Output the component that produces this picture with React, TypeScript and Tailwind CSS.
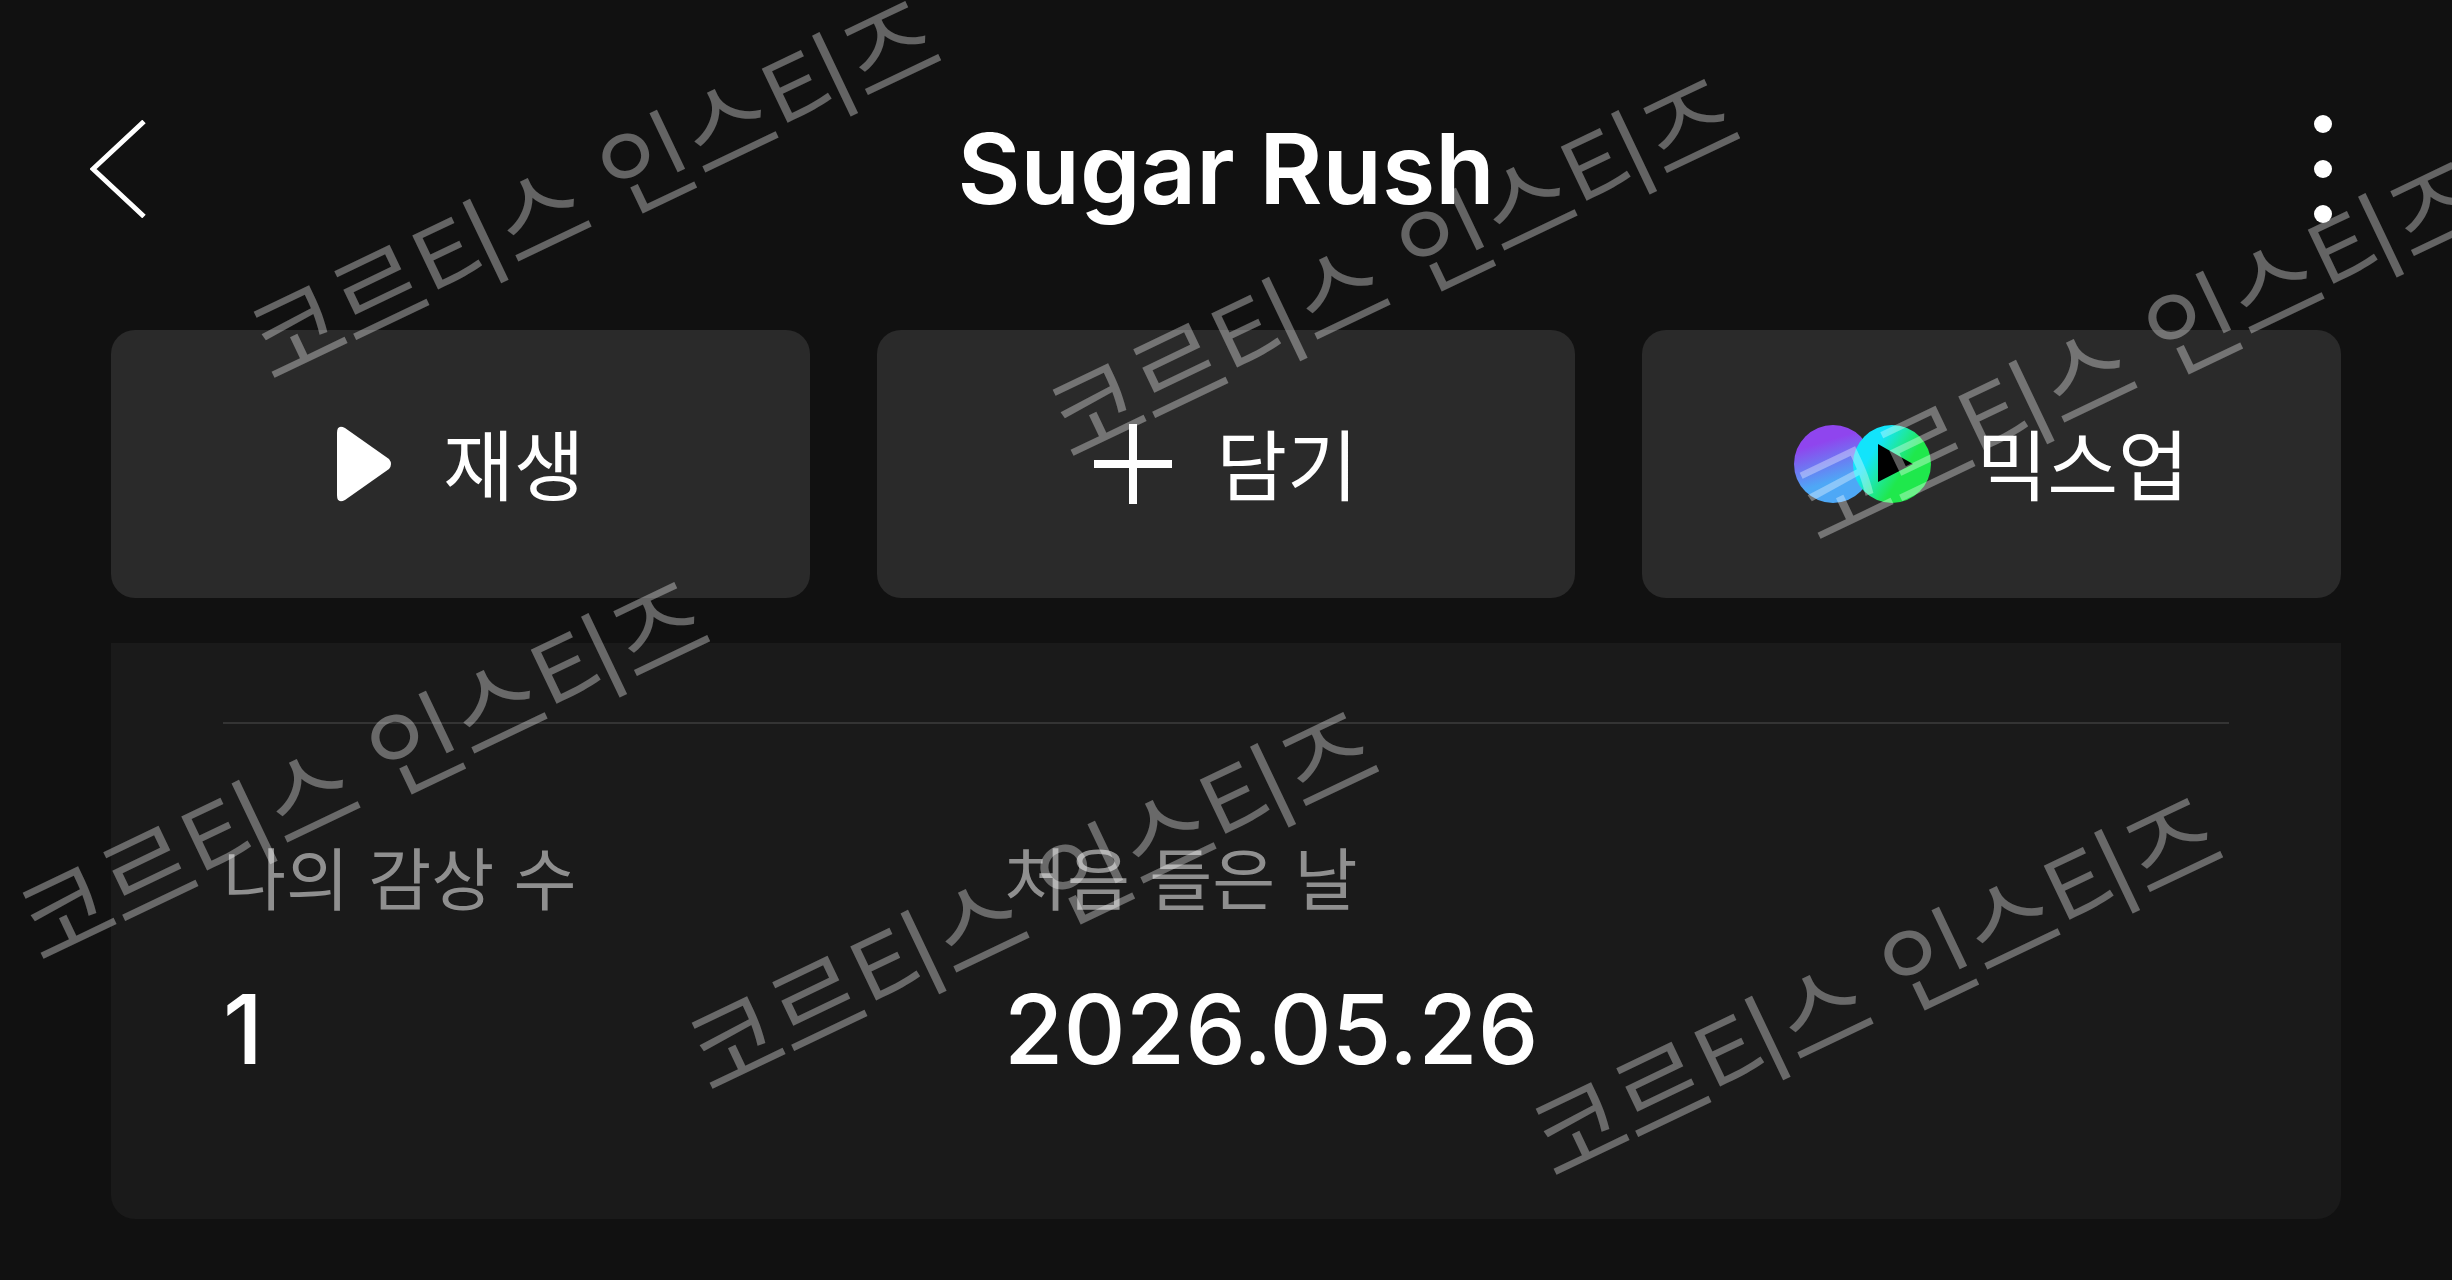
// Track detail screen - dark header, action buttons and listening stats
import React from 'react';

const KR = "font-['Inter','Noto_Sans_CJK_KR',sans-serif]";

const marks = [
  'left-[594px] top-[191px]',
  'left-[1393px] top-[269px]',
  'left-[2140px] top-[352px]',
  'left-[363px] top-[772px]',
  'left-[1032px] top-[902px]',
  'left-[1876px] top-[988px]',
];

const ActionButton: React.FC<{ icon: React.ReactNode; label: string }> = ({ icon, label }) => (
  <button className="h-[268px] flex-1 bg-[#2a2a2a] rounded-[24px] flex items-center justify-center gap-[44px] text-white">
    {icon}
    <span className="text-[77px] leading-none pt-[6px]">{label}</span>
  </button>
);

const MixupIcon = () => (
  <svg width="138" height="80" viewBox="0 0 138 80">
    <defs>
      <linearGradient id="mixA" x1="0" y1="0" x2="0.3" y2="1">
        <stop offset="0.3" stopColor="#8f45ee" />
        <stop offset="0.8" stopColor="#4ea8f6" />
      </linearGradient>
      <linearGradient id="mixB" x1="0" y1="0.3" x2="0.8" y2="0.8">
        <stop offset="0.25" stopColor="#12e4fb" />
        <stop offset="0.5" stopColor="#1ee8a0" />
        <stop offset="0.75" stopColor="#1fe84c" />
      </linearGradient>
    </defs>
    <circle cx="39" cy="40" r="39" fill="url(#mixA)" />
    <circle cx="98" cy="40" r="39" fill="url(#mixB)" />
    <path d="M84 20 L119 40 L84 58 Z" fill="#000" />
  </svg>
);

export default function App() {
  return (
    <div className={`relative w-full h-[1280px] overflow-hidden bg-[#111111] ${KR}`}>
      {/* Header */}
      <div className="h-[330px] pl-[90px] pr-[120px] flex items-start justify-between">
        <svg className="mt-[120px]" width="56" height="98" viewBox="0 0 56 98" fill="none">
          <path d="M54 1.5 L3 49 L54 96.5" stroke="#fff" strokeWidth="5" />
        </svg>
        <div className="mt-[115px] flex flex-col gap-[27px]">
          <div className="w-[18px] h-[18px] rounded-full bg-white" />
          <div className="w-[18px] h-[18px] rounded-full bg-white" />
          <div className="w-[18px] h-[18px] rounded-full bg-white" />
        </div>
      </div>
      <h1 className="absolute left-0 right-0 top-[110px] text-center text-white text-[97px] leading-[118px] font-semibold">
        Sugar Rush
      </h1>

      {/* Actions */}
      <div className="mx-[111px] flex gap-[67px]">
        <ActionButton
          label="재생"
          icon={
            <svg className="mr-[6px]" width="57" height="78" viewBox="0 0 57 78">
              <path d="M9 3 L53 34 Q57 39 53 44 L9 75 Q1 79 1 70 L1 8 Q1 -1 9 3 Z" fill="#fff" />
            </svg>
          }
        />
        <ActionButton
          label="담기"
          icon={
            <svg width="78" height="80" viewBox="0 0 78 80">
              <path d="M0 40 H78 M39 0 V80" stroke="#fff" strokeWidth="8" />
            </svg>
          }
        />
        <ActionButton label="믹스업" icon={<MixupIcon />} />
      </div>

      {/* Stats */}
      <div className="mx-[111px] mt-[45px] h-[576px] bg-[#1a1a1a] rounded-b-[24px] px-[112px] pt-[79px]">
        <div className="h-[2px] bg-[#343434]" />
        <div className="mt-[117px] grid grid-cols-[781px_1fr]">
          <div className="text-[68.5px] leading-[80px] text-[#8f8f8f]">나의 감상 수</div>
          <div className="text-[68.5px] leading-[80px] text-[#8f8f8f]">처음 들은 날</div>
          <div className="mt-[53px] text-[96.5px] leading-[110px] font-medium text-white">1</div>
          <div className="mt-[53px] text-[96.5px] leading-[110px] font-medium text-white">2026.05.26</div>
        </div>
      </div>

      {/* Watermarks */}
      {marks.map((pos) => (
        <div
          key={pos}
          className={`absolute ${pos} -translate-x-1/2 -translate-y-1/2 -rotate-[25.5deg] whitespace-nowrap pointer-events-none text-[99px] tracking-[-0.01em] leading-none font-normal text-white/35`}
        >
          코르티스 인스티즈
        </div>
      ))}
    </div>
  );
}
